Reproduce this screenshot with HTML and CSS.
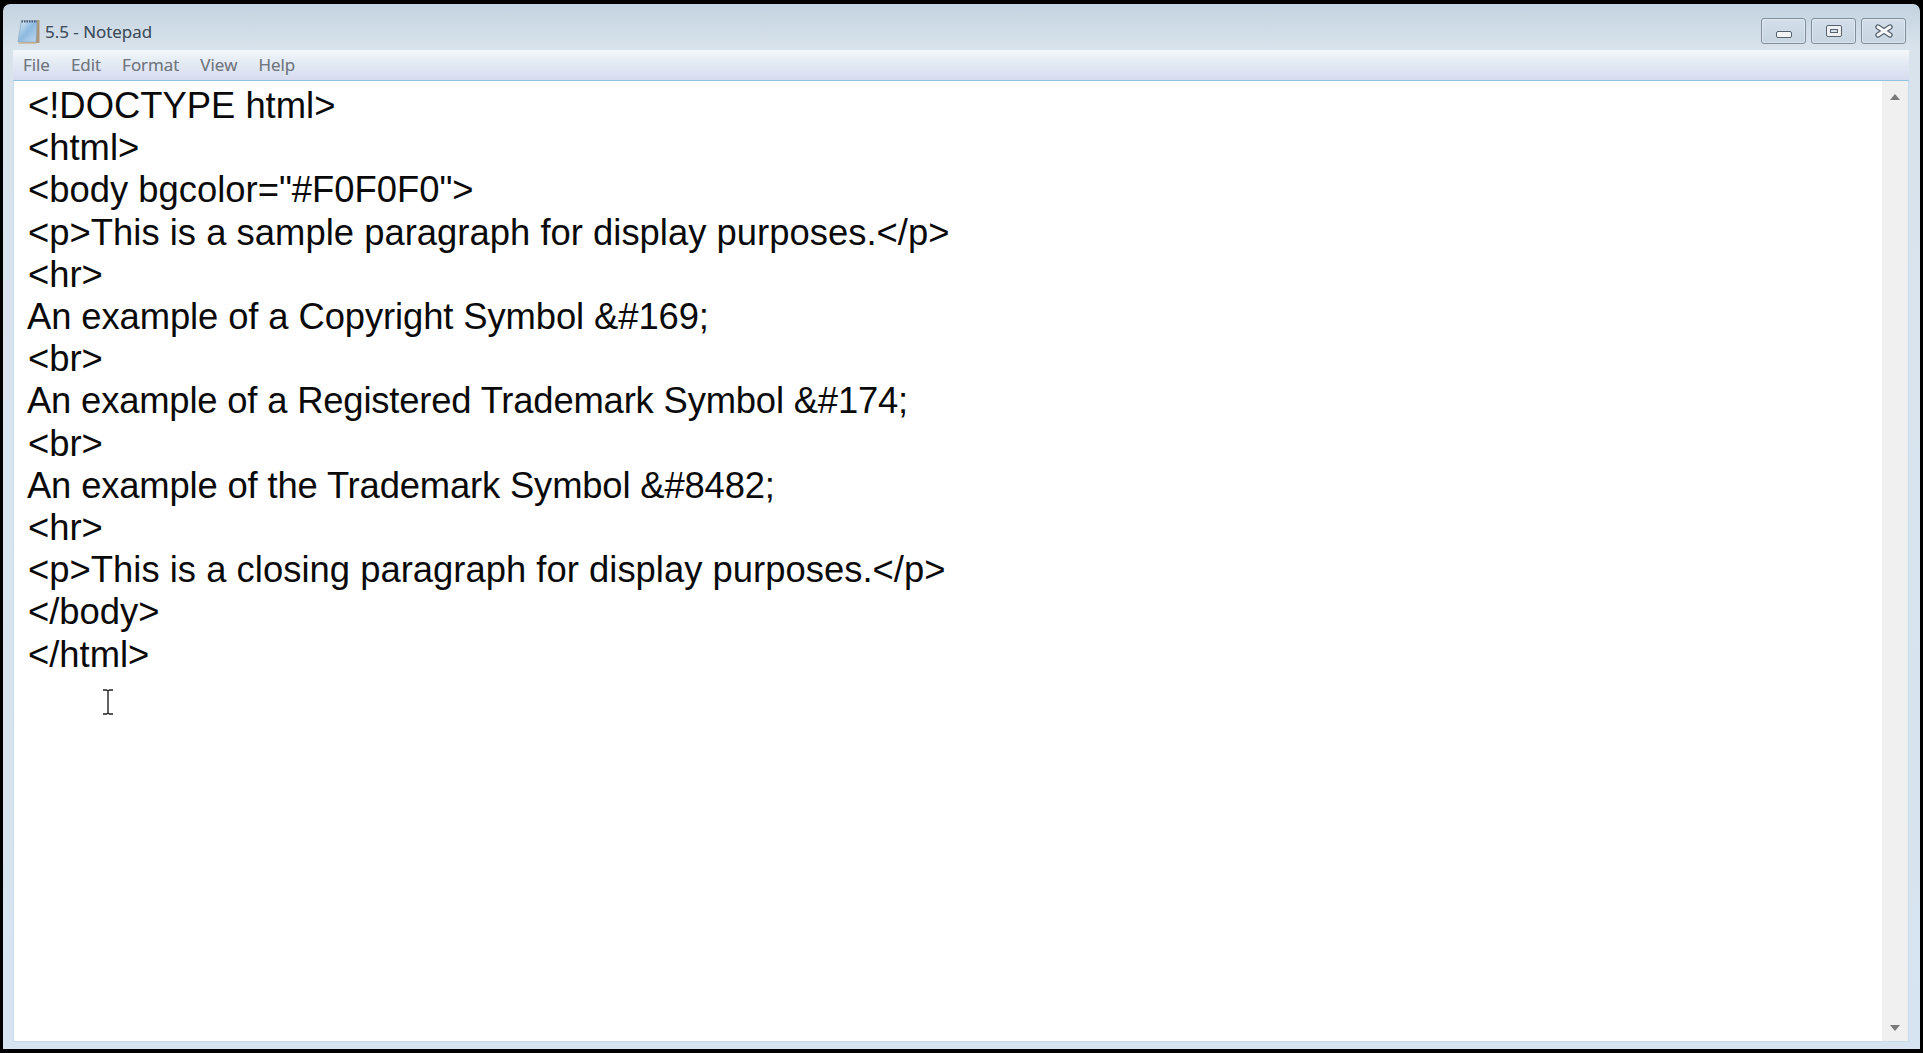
FILE: index.html
```html
<!DOCTYPE html>
<html lang="en">
<head>
<meta charset="utf-8">
<title>5.5 - Notepad</title>
<link rel="stylesheet" href="styles.css">
</head>
<body>
<div class="window">
  <header class="titlebar">
    <div class="title-left">
      <svg class="app-icon" width="24" height="27" viewBox="0 0 24 27">
        <defs><linearGradient id="pg" x1="0" y1="0" x2="1" y2="1"><stop offset="0" stop-color="#e4eff9"/><stop offset=".5" stop-color="#8db9e0"/><stop offset="1" stop-color="#c0d9ee"/></linearGradient></defs>
        <path d="M19 2h3.500v23H5z" fill="#ab967a"/>
        <path d="M4.500 2.500h15.500l-1 21.500H1z" fill="url(#pg)" stroke="#88a6c2" stroke-width=".7"/>
        <path d="M4.500 3.500h15.500" stroke="#46566a" stroke-width="1.800" stroke-dasharray="1.500 1"/>
        <path d="M1.500 25h18" stroke="#c8b496" stroke-width="1.500"/>
      </svg>
      <span class="title-text">5.5 - Notepad</span>
    </div>
    <div class="controls">
      <div class="ctl"><span class="ico-min"></span></div>
      <div class="ctl"><span class="ico-max"><span class="ico-max-inner"></span></span></div>
      <div class="ctl">
        <svg width="20" height="14" viewBox="0 0 20 14"><path d="M4 3l12 8M16 3l-12 8" stroke="#56626e" stroke-width="5.400" stroke-linecap="round"/><path d="M4 3l12 8M16 3l-12 8" stroke="#f6f7f8" stroke-width="3" stroke-linecap="round"/></svg>
      </div>
    </div>
  </header>
  <nav class="menubar">
    <span>File</span><span>Edit</span><span>Format</span><span>View</span><span>Help</span>
  </nav>
  <main class="client">
    <div class="editor">
      <div class="code">
        <div class="line">&lt;!DOCTYPE html&gt;</div>
        <div class="line">&lt;html&gt;</div>
        <div class="line">&lt;body bgcolor="#F0F0F0"&gt;</div>
        <div class="line line-wide">&lt;p&gt;This is a sample paragraph for display purposes.&lt;/p&gt;</div>
        <div class="line">&lt;hr&gt;</div>
        <div class="line line-a">An example of a Copyright Symbol &amp;#169;</div>
        <div class="line">&lt;br&gt;</div>
        <div class="line line-b">An example of a Registered Trademark Symbol &amp;#174;</div>
        <div class="line">&lt;br&gt;</div>
        <div class="line line-c">An example of the Trademark Symbol &amp;#8482;</div>
        <div class="line">&lt;hr&gt;</div>
        <div class="line line-wide">&lt;p&gt;This is a closing paragraph for display purposes.&lt;/p&gt;</div>
        <div class="line">&lt;/body&gt;</div>
        <div class="line">&lt;/html&gt;</div>
      </div>
      <svg class="ibeam" width="12" height="26" viewBox="0 0 12 26"><path d="M1 1h3.500l1.500 1 1.500-1H11M1 25h3.500l1.500-1 1.500 1H11M6 2v22" fill="none" stroke="#222" stroke-width="1.400"/></svg>
    </div>
    <aside class="scrollbar">
      <span class="arrow-up"></span>
      <span class="arrow-down"></span>
    </aside>
  </main>
</div>
</body>
</html>
```
FILE: styles.css
```css
html, body {
  margin: 0;
  padding: 0;
  width: 100%;
  height: 100%;
  overflow: hidden;
  background: #000;
}
body {
  display: flex;
  flex-direction: column;
  padding: 4px 3px 4px 3px;
  box-sizing: border-box;
  font-family: "Liberation Sans", Arial, sans-serif;
}
.window {
  flex: 1;
  min-height: 0;
  display: flex;
  flex-direction: column;
  padding: 0 11px 7px 10px;
  border-radius: 7px 7px 0 0;
  background: linear-gradient(180deg, #c4d3e0 0, #d9e3ec 46px, #d6e4f1 100%);
}
.titlebar {
  height: 46px;
  box-sizing: border-box;
  padding-top: 8px;
  display: flex;
  align-items: center;
  justify-content: space-between;
  flex: none;
}
.title-left {
  display: flex;
  align-items: center;
  gap: 4px;
  padding-left: 4px;
}
.app-icon { display: block; }
.title-text {
  font-family: "Open Sans", "Noto Sans", sans-serif;
  font-size: 17px;
  color: #3f4d5c;
  text-shadow: 0 0 .6px rgba(63,77,92,.6);
}
.controls {
  display: flex;
  gap: 5px;
  margin-right: 3px;
}
.ctl {
  width: 43px;
  height: 24px;
  border: 1px solid #818f9c;
  border-radius: 3px;
  background: linear-gradient(180deg, #d2dee8, #c8d6e2);
  box-shadow: inset 0 0 0 1px rgba(255,255,255,.35);
  display: flex;
  align-items: center;
  justify-content: center;
}
.ico-min {
  width: 14px;
  height: 5px;
  margin-top: 7px;
  border: 1px solid #56626e;
  border-radius: 2px;
  background: #f2f4f6;
}
.ico-max {
  width: 14px;
  height: 10px;
  border: 1px solid #56626e;
  border-radius: 2px;
  background: #eef1f4;
  display: flex;
  align-items: center;
  justify-content: center;
}
.ico-max-inner {
  width: 6px;
  height: 2px;
  border: 1px solid #56626e;
  background: #d6e0e8;
}
.menubar {
  flex: none;
  height: 30px;
  box-sizing: border-box;
  padding: 0 0 2px 10px;
  display: flex;
  align-items: center;
  gap: 21px;
  background: linear-gradient(180deg, #f3f7fa 0, #e8eef5 30%, #d6dcee 100%);
  font-family: "Open Sans", "Noto Sans", sans-serif;
  font-size: 17px;
  color: #70767e;
  text-shadow: 0 0 .6px rgba(112,118,126,.6);
}
.client {
  flex: 1;
  min-height: 0;
  display: flex;
  border: 1px solid #c6dcec;
  border-top-color: #8fc4e0;
  background: #fff;
}
.editor {
  flex: 1;
  min-width: 0;
  position: relative;
  padding: 4px 0 0 14px;
}
.code {
  font-family: "Liberation Sans", Arial, sans-serif;
  font-size: 36.400px;
  line-height: 42.200px;
  color: #0a0a0a;
}
.line { white-space: pre; }
.line-wide { letter-spacing: .02px; }
.line-a { letter-spacing: -.1px; margin-left: -1px; }
.line-b { letter-spacing: -.18px; margin-left: -1px; }
.line-c { letter-spacing: -.16px; margin-left: -1px; }
.ibeam {
  position: absolute;
  left: 88px;
  top: 608px;
}
.scrollbar {
  width: 26px;
  flex: none;
  background: #f0f0f0;
  display: flex;
  flex-direction: column;
  justify-content: space-between;
  align-items: center;
  padding: 13px 0 10px;
}
.arrow-up {
  width: 0;
  height: 0;
  border-left: 5px solid transparent;
  border-right: 5px solid transparent;
  border-bottom: 6px solid #7a7a7a;
}
.arrow-down {
  width: 0;
  height: 0;
  border-left: 5px solid transparent;
  border-right: 5px solid transparent;
  border-top: 6px solid #7a7a7a;
}
```
